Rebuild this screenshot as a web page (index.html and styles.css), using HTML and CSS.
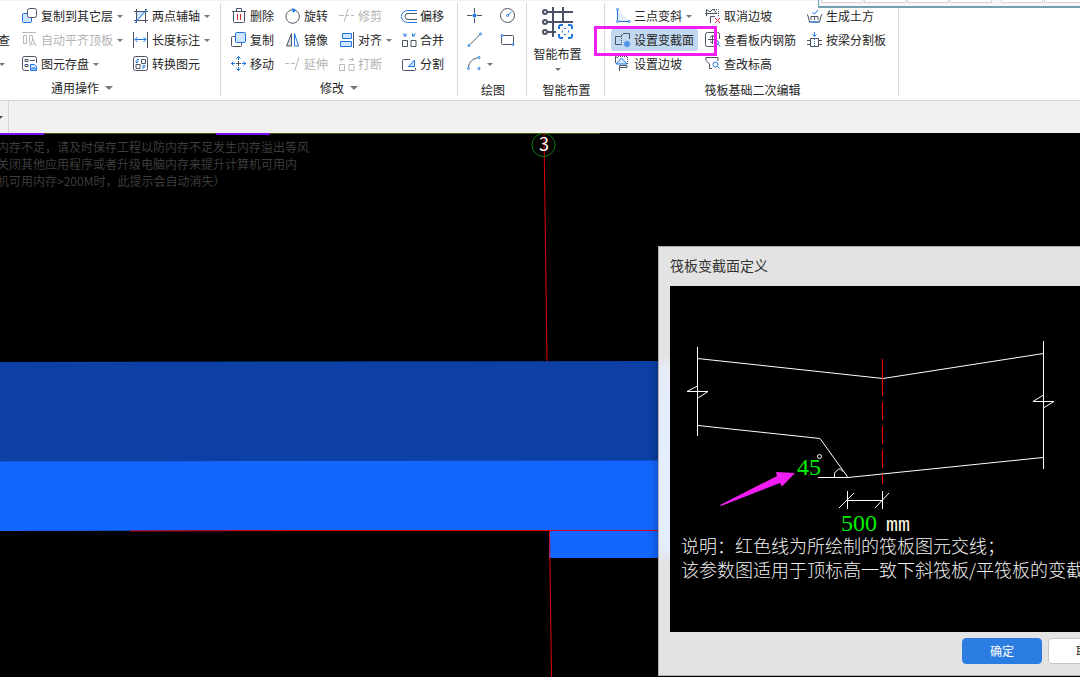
FILE: index.html
```html
<!DOCTYPE html>
<html lang="zh-CN">
<head>
<meta charset="utf-8">
<title>筏板变截面定义</title>
<link rel="stylesheet" href="styles.css">
</head>
<body>
<div class="app">
  <header class="ribbon">
    <section class="group">
      <div class="tools general">
        <span></span>
        <button class="tool"><svg class="icon" viewBox="0 0 16 16"><rect class="b pale" x=".5" y="5.5" width="9" height="9" rx="1"/><rect class="d white" x="5.5" y=".5" width="9" height="9" rx="2"/></svg>复制到其它层<i class="caret"></i></button>
        <button class="tool"><svg class="icon" viewBox="0 0 16 16"><path class="pale" d="M4 13V4h9z"/><path class="d" d="M3.500 1v14M12.500 1v14M1 3.500h14M1 12.500h14"/><path class="b" d="M2 15 14 1"/></svg>两点辅轴<i class="caret"></i></button>
        <button class="tool clipped">查</button>
        <button class="tool" disabled><svg class="icon" viewBox="0 0 16 16"><path class="g" d="M0 .5h14M1.500 3.500h3v8h-3zM10.500 8V3.500h-3v8"/><path class="g" d="m8 14 3-7 3 7M9 12h4"/></svg>自动平齐顶板<i class="caret"></i></button>
        <button class="tool"><svg class="icon" viewBox="0 0 16 16"><path class="d" d="M.5 0v16M14.500 0v16"/><path class="b" d="M2 7.500h11M4.500 5 2 7.500 4.500 10M10.500 5 13 7.500 10.500 10"/></svg>长度标注<i class="caret"></i></button>
        <button class="tool clipped" aria-label="更多"><i class="caret more"></i></button>
        <button class="tool"><svg class="icon" viewBox="0 0 16 16"><path class="d" d="M7 14.500H2.500a2 2 0 0 1-2-2v-10a2 2 0 0 1 2-2h10a2 2 0 0 1 2 2V7M3 3.500h3v2H3zM8 4.500h5M3 8.500h3v2H3z"/><path class="b pale" d="M8.500 8.500h4l2 2v4h-6zM10 14v-2h3v2"/></svg>图元存盘<i class="caret"></i></button>
        <button class="tool"><svg class="icon" viewBox="0 0 16 16"><rect class="d" x=".5" y=".5" width="14" height="14" rx="2"/><path class="d" d="M8.500 3.500h4v4h-4zM3 8.500h4v4H3z"/><path class="b" d="M6 3.500H4V7M2.500 5.500 4 7l1.500-1.500M9 12h2V9M9.500 10.500 11 9l1.500 1.500"/></svg>转换图元</button>
      </div>
      <h2 class="caption">通用操作<i class="caret wide"></i></h2>
    </section>

    <section class="group">
      <div class="tools modify">
        <button class="tool"><svg class="icon" viewBox="0 0 16 16"><path class="d" d="M1 3.500h14M5.500 3V.5h5V3M2.500 4v9.500a1 1 0 0 0 1 1h9a1 1 0 0 0 1-1V4"/><path class="r" d="M6.500 6v6M9.500 6v6"/></svg>删除</button>
        <button class="tool"><svg class="icon" viewBox="0 0 16 16"><path class="d" d="M11 2.700A6.700 6.700 0 1 1 7.500 1.800"/><path class="bf" d="m7 0 4.500 2L8 5z"/></svg>旋转</button>
        <button class="tool" disabled><svg class="icon" viewBox="0 0 16 16"><path class="g" d="M0 7.500h5M7 7.500h3M12 7.500h3M5 14 9 1"/></svg>修剪</button>
        <button class="tool"><svg class="icon" viewBox="0 0 16 16"><path class="b" d="M16 2.500H6.500a6 6 0 0 0 0 12H16"/><path class="d" d="M16 5.500H7a3 3 0 0 0 0 6h9"/></svg>偏移</button>
        <button class="tool"><svg class="icon" viewBox="0 0 16 16"><rect class="d" x=".5" y="4.500" width="10" height="10" rx="1"/><rect class="b pale" x="4.500" y=".5" width="10" height="10" rx="1"/></svg>复制</button>
        <button class="tool"><svg class="icon" viewBox="0 0 16 16"><path class="d shade" d="M6.500 1.500v12.500H1.500z"/><path class="b" d="M9.500 1.500v12.500h4z"/></svg>镜像</button>
        <button class="tool"><svg class="icon" viewBox="0 0 16 16"><path class="b pale" d="M3.500 1.500h9v5h-9zM1.500 9.500h11v5h-11z"/><path class="d" d="M14.500 0v16"/></svg>对齐<i class="caret"></i></button>
        <button class="tool"><svg class="icon" viewBox="0 0 16 16"><path class="d" d="M1.500 8.500h5v6h-5zM10 8.500h5v6h-5z"/><path class="b" d="M2 1.500 5 4M5 1.500V4H2.500M14.500 1.500l-3 2.500M11.500 1.500V4H14"/></svg>合并</button>
        <button class="tool"><svg class="icon" viewBox="0 0 16 16"><path class="d" d="M7.500 5v5M5 7.500h5"/><path class="b" d="M7.500 0v4M5.500 2.500l2-2 2 2M7.500 11v4M5.500 12.500l2 2 2-2M0 7.500h4M2.500 5.500l-2 2 2 2M11 7.500h4M12.500 5.500l2 2-2 2"/></svg>移动</button>
        <button class="tool" disabled><svg class="icon" viewBox="0 0 16 16"><path class="g" d="M0 7.500h4M6 7.500h4M10 14l4-13"/></svg>延伸</button>
        <button class="tool" disabled><svg class="icon" viewBox="0 0 16 16"><path class="g" d="M.5 8.500h5v6h-5zM10 8.500h5v6h-5zM1 3.500h4M3 1.500l-2 2 2 2M10 3.500h4M12.500 1.500l2 2-2 2"/></svg>打断</button>
        <button class="tool"><svg class="icon" viewBox="0 0 16 16"><path class="d" d="M9 3.500H2.500q-1 0-1 1v9q0 1 1 1h11q1 0 1-1V12"/><path class="b pale" d="m7.500 10.500 6-6.500v6.500z"/></svg>分割</button>
      </div>
      <h2 class="caption">修改<i class="caret wide"></i></h2>
    </section>

    <section class="group">
      <div class="tools draw">
        <button class="tool" aria-label="点"><svg class="icon" viewBox="0 0 16 16"><path class="d" d="M7.500 0v5M7.500 10v5M0 7.500h5M10 7.500h5"/><circle class="bf" cx="7.500" cy="7.500" r="2"/></svg></button>
        <button class="tool" aria-label="圆"><svg class="icon" viewBox="0 0 16 16"><circle class="d" cx="7.500" cy="7.500" r="7"/><path class="b" d="m8 7 3.500-3"/><circle class="b" cx="7.500" cy="7.500" r="1"/></svg></button>
        <button class="tool" aria-label="直线"><svg class="icon" viewBox="0 0 16 16"><path class="d" d="M3 12.500 12.500 3"/><circle class="b" cx="2" cy="13.500" r="1"/><circle class="b" cx="13.500" cy="2" r="1"/></svg></button>
        <button class="tool" aria-label="矩形"><svg class="icon" viewBox="0 0 16 16"><rect class="d" x="1.500" y="3.500" width="12" height="9" rx="1"/><circle class="b white" cx="2" cy="3.500" r="1"/><circle class="b white" cx="13" cy="12.500" r="1"/></svg></button>
        <button class="tool" aria-label="圆弧"><svg class="icon" viewBox="0 0 16 16"><path class="d" d="M1.500 11C2 6 6 2.500 10.500 2"/><circle class="b" cx="1.500" cy="12.500" r="1"/><circle class="b" cx="12" cy="1.500" r="1"/><circle class="b" cx="12" cy="12.500" r="1"/></svg><i class="caret"></i></button>
      </div>
      <h2 class="caption low">绘图</h2>
    </section>

    <section class="group">
      <button class="smart"><svg class="big" viewBox="0 0 32 32"><path class="d thick" d="M5 5h26M5 15h26M5 25h9M11 0v30M21 0v16"/><circle class="d thick white" cx="3" cy="5" r="2"/><circle class="d thick white" cx="3" cy="15" r="2"/><circle class="d thick white" cx="3" cy="25" r="2"/><path class="white" d="M16 17h15v15H16z"/><path class="b thick" d="M17 22v-2q0-2 2-2h2M26 18h2q2 0 2 2v2M30 27v2q0 2-2 2h-2M21 31h-2q-2 0-2-2v-2"/><path class="b thick" d="M23 21v1M23 27v1M20 24.500h1M26 24.500h1"/></svg>智能布置<i class="caret"></i></button>
      <h2 class="caption low">智能布置</h2>
    </section>

    <section class="group">
      <div class="tools raft">
        <button class="tool"><svg class="icon" viewBox="0 0 16 16"><path class="palest" d="M3 2 14 13H3z"/><path class="b" d="M2.500 2v11.500H14"/><circle class="b white" cx="2.500" cy="1.500" r="1"/><circle class="b white" cx="2.500" cy="13.500" r="1"/><circle class="b white" cx="14" cy="13.500" r="1"/></svg>三点变斜<i class="caret"></i></button>
        <button class="tool"><svg class="icon" viewBox="0 0 16 16"><path class="d" d="M1.500 8V1.500L5 4l3-3 4 4.500H0M5.500 15V8.500H10"/><path class="d dots" d="M7 1.500h6.500V8"/><path class="r" d="m10 10 5 5m0-5-5 5"/></svg>取消边坡</button>
        <button class="tool"><svg class="icon" viewBox="0 0 16 16"><path class="d" d="m0 6 1 2 1.500 6h10L14 8l1-2M4 12V8.500h7V12M7.500 8.500V12"/><path class="b" d="M2.500 14h10M5.500 4.500l2 1.500L11 2"/></svg>生成土方</button>
        <button class="tool selected"><svg class="icon" viewBox="0 0 16 16"><path class="d" d="M7 12.500H.5v-8h5l3-3h6V7"/><path class="d dots" d="M6.500 4v8"/><circle class="gear" cx="12" cy="12" r="3"/><circle class="b pale" cx="12" cy="12" r="1"/></svg>设置变截面<span class="marker"></span></button>
        <button class="tool"><svg class="icon" viewBox="0 0 16 16"><path class="d" d="M9 14.500H2.500q-2 0-2-2v-10q0-2 2-2h10q2 0 2 2V7M3 7.500h9M7.500 3v9M5 5.500l2.500-2L10 5.500M5 9.500l2.500 2"/><circle class="b white" cx="11.500" cy="10.500" r="2"/><path class="b" d="m13 12 2 2.500"/></svg>查看板内钢筋</button>
        <button class="tool"><svg class="icon" viewBox="0 0 16 16"><path class="d" d="M3.500 6.500h8v8h-8zM0 8.500h3M0 12.500h3M12 8.500h3M12 12.500h3"/><path class="b" d="M7.500 0v4M5.500 2.500l2 2 2-2"/><path class="b dots" d="M7.500 7v7"/></svg>按梁分割板</button>
        <button class="tool"><svg class="icon" viewBox="0 0 16 16"><path class="d" d="M.5 7V.5L3 2M4.500 15V9.500H12v2H5"/><path class="d dots" d="M3 .5h9.500V8"/><path class="b pale" d="m1 8 5.500-6L12 8z"/></svg>设置边坡</button>
        <button class="tool"><svg class="icon" viewBox="0 0 16 16"><path class="d" d="M7 12.500H4.500V8L1 4.500V1.500h12V5"/><circle class="b" cx="10.500" cy="8.500" r="2.500"/><path class="b" d="m12.500 10.500 2 2"/></svg>查改标高</button>
      </div>
      <h2 class="caption low">筏板基础二次编辑</h2>
    </section>
    <div class="floating"><span></span><span></span><span></span><span></span><span></span><span></span><span></span></div>
  </header>

  <div class="subbar"><button class="picker" aria-label="选择"><i class="caret"></i></button></div>

  <main class="canvas">
    <svg class="model">
      <path fill="#0c40a4" d="M0 229 658 228v100L0 329z"/>
      <path fill="#1366ff" d="M0 328.500 658 327.500V397L0 398z"/>
      <path fill="#1366ff" d="M549 398h109v27H549z"/>
      <path class="edge" d="M130 398 L300 397.500H658M549.500 398l2 146"/>
      <path class="axis" d="M544 0l3 228"/>
      <circle class="bubble" cx="543.500" cy="12" r="11.500"/>
      <text class="axis-no" x="544" y="18">3</text>
      <path stroke="#50500f" d="M0 .5h600"/>
      <path stroke="#7b12f5" stroke-width="2" d="M0 1h44M216 1h54"/>
    </svg>
    <p class="warning">内存不足，请及时保存工程以防内存不足发生内存溢出等风<br>关闭其他应用程序或者升级电脑内存来提升计算机可用内<br>机可用内存&gt;200M时，此提示会自动消失）</p>

    <section class="dialog" role="dialog" aria-labelledby="dialog-title">
      <h1 class="dialog-title" id="dialog-title">筏板变截面定义</h1>
      <div class="preview">
        <svg class="diagram">
          <g class="line">
            <path d="M27.500 61v89M27.500 72.500 213 92.500 373.500 67.500M373.500 55v128"/>
            <path d="M27.500 100 17 105.500h21L28 112M373.500 109 363 115.500h21l-10 6"/>
            <path d="M28 139.500l122 13 28 39 195-20M148 191.500h30M164.500 191v-4l4-4h2l3 3"/>
            <path d="M177.500 205v18M212.500 205v18M177.500 214.500h35M169 222l15-15M205 222l14-15"/>
            <circle cx="149.500" cy="170.500" r="2"/>
          </g>
          <path class="joint" d="M212.500 73v19"/>
          <path class="joint dashed" d="M212.500 92v106"/>
          <text class="value" x="127" y="189">45</text>
          <text class="value" x="171" y="245">500</text>
          <text class="unit" x="216" y="245">mm</text>
          <path fill="#f21df2" d="M50 219 107 190l-1-4 19 1-13 13.500-2-3.500-59 23z"/>
        </svg>
        <p class="note">说明：红色线为所绘制的筏板图元交线；<br>该参数图适用于顶标高一致下斜筏板/平筏板的变截面</p>
      </div>
      <footer class="actions"><button class="btn primary">确定</button><button class="btn">取消</button></footer>
    </section>
  </main>
</div>
</body>
</html>
```
FILE: styles.css
```css
* { box-sizing: border-box; }
body {
  margin: 0;
  overflow: hidden;
  font: 12px/16px "Noto Sans CJK SC", sans-serif;
  color: #262626;
}
button {
  font: inherit;
  color: inherit;
  border: 0;
  padding: 0;
  background: none;
  white-space: nowrap;
}
.app { display: flex; flex-direction: column; height: 100vh; }

/* Ribbon */
.ribbon {
  position: relative;
  display: flex;
  flex: none;
  padding: 2px 0 4px;
  background: #fff;
  border-top: 1px solid #f1f1f1;
  border-bottom: 1px solid #d5d5d5;
}
.group {
  display: flex;
  flex-direction: column;
  padding-top: 1px;
  border-right: 1px solid #dadada;
}
.tools {
  display: grid;
  grid-auto-rows: 24px;
  align-items: center;
  justify-items: start;
}
.general { grid-template-columns: 22px 111px 87px; }
.modify { grid-template-columns: 54px 54px 62px 56px; padding-left: 10px; }
.draw { grid-template-columns: 33px 26px; padding-left: 9px; }
.raft { grid-template-columns: 90px 102px 91px; padding-left: 10px; }
.tool { position: relative; display: flex; align-items: center; gap: 3px; height: 22px; }
.tool:disabled { color: #b3b3b3; }
.clipped { margin-left: -2px; }
.more { margin-left: 4px; }
.selected {
  margin-left: -4px;
  padding: 0 4px;
  background: #c0d8f0;
  border-radius: 3px;
}
.marker {
  position: absolute;
  z-index: 1;
  inset: -3px -19px -5px -17px;
  border: 3px solid #f21df2;
}
.caret {
  flex: none;
  margin-left: 1px;
  border: solid transparent;
  border-width: 3px 3px 0;
  border-top-color: #777;
}
.caret.wide { border-width: 4px 4px 0; margin-left: 6px; }
.caption {
  display: flex;
  align-items: center;
  justify-content: center;
  margin: 0;
  height: 20px;
  padding-top: 4px;
  font-size: 12px;
  font-weight: 400;
}
.caption.low { padding-top: 8px; margin-left: 2px; }
.general + .caption { padding-right: 56px; }
.smart {
  display: flex;
  flex-direction: column;
  align-items: center;
  width: 77px;
  height: 72px;
  padding: 3px 16px 0 0;
}
.smart .caret { margin-top: 6px; }
.smart .big { margin-bottom: 7px; }

/* Icons */
.icon { flex: none; width: 16px; height: 16px; fill: none; }
.big { flex: none; width: 32px; height: 32px; fill: none; }
.d { stroke: #4b5364; }
.b { stroke: #1c76e2; }
.g { stroke: #b9b9b9; }
.r { stroke: #e02b35; }
.bf { fill: #1c76e2; }
.gear { fill: #5f9fe8; stroke: #5f9fe8; stroke-dasharray: 1 1; }
.pale { fill: #cfe4ff; }
.palest { fill: #e3efff; }
.shade { fill: #d8dbe1; }
.white { fill: #fff; }
.thick { stroke-width: 2; }
.dots { stroke-dasharray: 1 1; }

.floating {
  position: absolute;
  top: -1px;
  left: 818px;
  right: 0;
  display: flex;
  gap: 1px;
  height: 8px;
  padding: 0 0 2px 2px;
  background: #f7f7f7;
  border-left: 1px solid #779fb2;
  border-bottom: 2px solid #779fb2;
}
.floating span {
  flex: none;
  width: 42px;
  height: 3px;
  border: solid #d5d5d5;
  border-width: 0 1px 1px;
  background: #fff;
}
.floating span:nth-child(5) { margin-left: 8px; }

.subbar { display: flex; flex: none; height: 32px; background: #f1f1f1; }
.picker { width: 9px; border-right: 1px solid #d5d5d5; }
.picker .caret { display: block; width: 6px; margin-left: -3px; border-top-color: #444; }

/* Drawing area */
.canvas { position: relative; flex: 1; min-height: 0; overflow: hidden; background: #000; }
.model { display: block; width: 100%; height: 100%; }
.edge, .axis { fill: none; stroke: #e0000c; }
.bubble { fill: none; stroke: #0b7d14; }
.axis-no { fill: #fff; font: 18px "Noto Sans CJK SC", sans-serif; text-anchor: middle; }
.warning {
  position: absolute;
  top: 5px;
  left: -3px;
  margin: 0;
  line-height: 17px;
  color: #3c3c3c;
  white-space: nowrap;
}

/* Dialog */
.dialog {
  position: absolute;
  top: 113px;
  left: 658px;
  width: 484px;
  padding: 0 11px;
  background: linear-gradient(#e3e3e3 108px, #e6ecf8 122px, #e4eeff 220px, #e4eeff 300px, #e3e3e3 318px);
  border: 1px solid #b0b0b0;
  box-shadow: 0 0 10px rgba(0, 0, 0, .35);
}
.dialog-title {
  margin: 0;
  padding-bottom: 2px;
  font-size: 14px;
  font-weight: 400;
  line-height: 37px;
  color: #333;
}
.preview { height: 346px; background: #000; }
.diagram { display: block; width: 100%; height: 247px; fill: none; }
.line { stroke: #fff; }
.joint { stroke: #f00; }
.dashed { stroke-dasharray: 18 6; }
.value { fill: #00f000; font: 24px "Liberation Serif", serif; }
.unit { fill: #fffbe8; font: 20px "Liberation Mono", monospace; }
.note {
  margin: 0;
  padding-left: 11px;
  overflow: hidden;
  font-size: 18px;
  font-weight: 300;
  line-height: 24px;
  color: #f2f2f2;
  white-space: nowrap;
}
.actions { display: flex; justify-content: flex-end; gap: 6px; padding: 6px 2px 11px; }
.btn {
  width: 80px;
  height: 26px;
  background: #fff;
  border: 1px solid #c6c6c6;
  border-radius: 4px;
}
.primary { color: #fff; background: #2b7de1; border-color: #2b7de1; }
```
